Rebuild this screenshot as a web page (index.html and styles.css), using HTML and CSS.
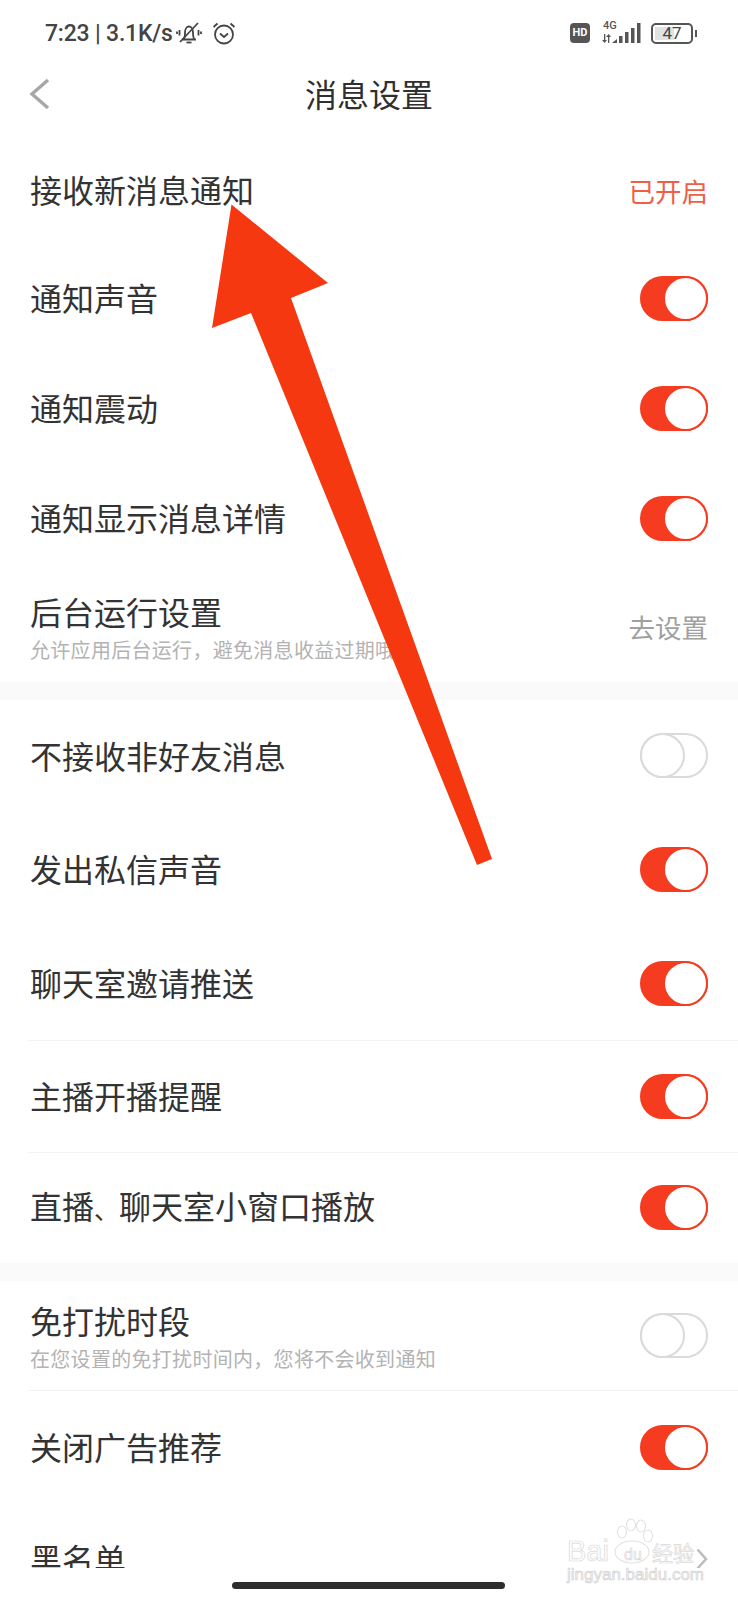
FILE: index.html
```html
<!DOCTYPE html>
<html lang="zh-CN">

<head>
    <meta charset="UTF-8">
    <title>消息设置</title>
    <link rel="stylesheet" href="styles.css">
</head>

<body>
    <div class="phone">
        <div class="statusBar">
            <div class="statusLeft">
                <span class="time">7:23 | 3.1K/s</span>
                <svg class="bell" width="26" height="24" viewBox="0 0 26 24" fill="none" stroke="#444" stroke-width="1.800">
                    <path d="M6 18.500h14M7.500 18.500c1.500-1.800 1.500-3.500 1.500-7 0-3.500 1.800-6 4-6s4 2.500 4 6c0 3.500 0 5.200 1.500 7"></path>
                    <path d="M10.500 21.500h5"></path>
                    <path d="M4 21 22 2"></path>
                    <path d="M3.500 9v5.500M1 10.500v2.500M22.500 9v5.500M25 10.500v2.500"></path>
                </svg>
                <svg class="alarm" width="24" height="24" viewBox="0 0 24 24" fill="none" stroke="#444" stroke-width="1.800">
                    <circle cx="12" cy="13.500" r="9"></circle>
                    <path d="M8 12.500l4 3.500 4-3.500"></path>
                    <path d="M1.500 6 5.500 2.500M22.500 6 18.500 2.500"></path>
                </svg>
            </div>
            <div class="statusRight">
                <span class="hd">HD</span>
                <div class="signal">
                    <span class="fourG">4G</span>
                    <svg width="40" height="22" viewBox="0 0 40 22" fill="#555">
                        <path d="M2 12h1.300v6H5l-2.400 3L0 18h2zM6 21h1.300v-6H9l-2.400-3L4 15h2z"></path>
                        <path d="M10 21l5-4v4zM17 14h3.500v7H17zM23 10h3.500v11H23zM29 6h3.500v15H29zM35 1h3.500v20H35z"></path>
                    </svg>
                </div>
                <div class="battery"><span class="level"></span><span class="percent">47</span></div>
                <span class="batteryTip"></span>
            </div>
        </div>

        <div class="header">
            <svg class="back" width="22" height="32" viewBox="0 0 22 32" fill="none" stroke="#a6a6a6" stroke-width="3.400">
                <path d="M19 2 3 16l16 14"></path>
            </svg>
            <span class="title">消息设置</span>
        </div>

        <div class="list">
            <div class="row first">
                <span class="name">接收新消息通知</span>
                <span class="state on">已开启</span>
            </div>
            <div class="row">
                <span class="name">通知声音</span>
                <span class="switch open"></span>
            </div>
            <div class="row">
                <span class="name">通知震动</span>
                <span class="switch open"></span>
            </div>
            <div class="row">
                <span class="name">通知显示消息详情</span>
                <span class="switch open"></span>
            </div>
            <div class="row sub">
                <div>
                    <div class="name">后台运行设置</div>
                    <div class="desc">允许应用后台运行，避免消息收益过期哦</div>
                </div>
                <span class="state">去设置</span>
            </div>
        </div>

        <div class="band"></div>

        <div class="list">
            <div class="row top">
                <span class="name">不接收非好友消息</span>
                <span class="switch"></span>
            </div>
            <div class="row tall">
                <span class="name">发出私信声音</span>
                <span class="switch open"></span>
            </div>
            <div class="row tall line">
                <span class="name">聊天室邀请推送</span>
                <span class="switch open"></span>
            </div>
            <div class="row mid line">
                <span class="name">主播开播提醒</span>
                <span class="switch open"></span>
            </div>
            <div class="row">
                <span class="name">直播<span class="pause">、</span>聊天室小窗口播放</span>
                <span class="switch open"></span>
            </div>
        </div>

        <div class="band"></div>

        <div class="list">
            <div class="row line">
                <div>
                    <div class="name">免打扰时段</div>
                    <div class="desc">在您设置的免打扰时间内，您将不会收到通知</div>
                </div>
                <span class="switch"></span>
            </div>
            <div class="row tall">
                <span class="name">关闭广告推荐</span>
                <span class="switch open"></span>
            </div>
            <div class="row">
                <span class="name">黑名单</span>
                <svg class="more" width="12" height="22" viewBox="0 0 12 22" fill="none" stroke="#bdbdbd" stroke-width="2.600">
                    <path d="M1.500 1.500 10 11l-8.500 9.500"></path>
                </svg>
            </div>
        </div>

        <!-- the arrow someone painted on top of the screenshot -->
        <svg class="arrow" width="738" height="1600" viewBox="0 0 738 1600">
            <polygon fill="#f53810" points="231.500,204.500 328,283 291,298 492,859 477,865 251,313 212,328"></polygon>
        </svg>

        <div class="navBar"><span class="homeBar"></span></div>

        <div class="mark">
            <svg class="paw" width="42" height="46" viewBox="0 0 42 46" fill="#fff" stroke="#e2e2e2" stroke-width="1.100">
                <ellipse cx="9" cy="14" rx="4.500" ry="6"></ellipse>
                <ellipse cx="18" cy="7" rx="4.500" ry="6"></ellipse>
                <ellipse cx="28" cy="8" rx="4.500" ry="6"></ellipse>
                <ellipse cx="35" cy="18" rx="4.500" ry="6"></ellipse>
                <ellipse cx="19" cy="34" rx="17" ry="11"></ellipse>
            </svg>
            <span class="markBai">Bai</span>
            <span class="markDu">du</span>
            <span class="markJy">经验</span>
            <span class="markUrl">jingyan.baidu.com</span>
        </div>
    </div>
</body>

</html>
```

FILE: styles.css
```css
* {
    margin: 0px;
    padding: 0px;
    box-sizing: border-box;
}

html,
body {
    width: 738px;
    height: 1600px;
    overflow: hidden;
    background-color: #fff;
}

body {
    font-family: "Noto Sans CJK SC", "Noto Sans", sans-serif;
    color: #333;
}

.phone {
    position: relative;
    width: 738px;
    height: 1600px;
    overflow: hidden;
}

.statusBar {
    display: flex;
    justify-content: space-between;
    align-items: center;
    height: 66px;
    padding: 0 41px 0 45px;
}

.statusLeft,
.statusRight {
    display: flex;
    align-items: center;
}

.time {
    font-family: Roboto, sans-serif;
    font-size: 23px;
    font-weight: 500;
    letter-spacing: -.2px;
    color: #444;
    white-space: nowrap;
}

.bell {
    margin-left: 3px;
}

.alarm {
    margin-left: 10px;
}

.hd {
    width: 20px;
    height: 20px;
    border-radius: 4px;
    background-color: #555;
    color: #fff;
    font-family: Roboto, sans-serif;
    font-size: 11px;
    font-weight: 700;
    line-height: 20px;
    text-align: center;
}

.signal {
    position: relative;
    width: 40px;
    height: 22px;
    margin-left: 12px;
}

.signal svg {
    position: absolute;
    left: 0;
    top: 0;
}

.fourG {
    position: absolute;
    left: 1px;
    top: -2px;
    font-family: Roboto, sans-serif;
    font-size: 11px;
    line-height: 11px;
    font-weight: 500;
    color: #555;
}

.battery {
    position: relative;
    width: 42px;
    height: 21px;
    margin-left: 9px;
    border: 2px solid #555;
    border-radius: 5px;
    text-align: center;
}

.level {
    position: absolute;
    left: 2px;
    top: 2px;
    bottom: 2px;
    width: 19px;
    background-color: #e2e2e2;
}

.percent {
    position: relative;
    display: block;
    font-family: Roboto, sans-serif;
    font-size: 17px;
    line-height: 17px;
    color: #444;
}

.batteryTip {
    width: 2px;
    height: 7px;
    margin-left: 2px;
    background-color: #555;
}

.header {
    position: relative;
    display: flex;
    justify-content: center;
    align-items: center;
    height: 54px;
}

.back {
    position: absolute;
    left: 29px;
    top: 12px;
}

.title {
    font-size: 32px;
    color: #2f2f2f;
}

.list {
    background-color: #fff;
}

.row {
    display: flex;
    justify-content: space-between;
    align-items: center;
    height: 110px;
    padding: 0 30px 2px;
}

.row.first {
    height: 124px;
    padding-top: 18px;
}

.row.sub {
    height: 108px;
    padding-bottom: 4px;
}

.row.top {
    height: 113px;
}

.row.tall {
    height: 114px;
}

.row.mid {
    height: 112px;
}

.row.line {
    position: relative;
}

.row.line::after {
    content: "";
    position: absolute;
    left: 28px;
    right: 0;
    bottom: 0;
    height: 1px;
    background-color: #f3f3f3;
}

.name {
    font-size: 32px;
    line-height: 44px;
    padding-bottom: 2px;
    color: #333;
}

.pause {
    font-size: 25px;
}

.desc {
    margin-top: 1px;
    font-size: 20px;
    line-height: 28px;
    letter-spacing: .3px;
    color: #b3b3b3;
}

.state {
    font-size: 26.500px;
    color: #a0a0a0;
}

.state.on {
    color: #ef5f47;
}

.band {
    height: 18px;
    background-color: #fafafa;
}

.switch {
    position: relative;
    flex: none;
    width: 68px;
    height: 45px;
    border: 2px solid #dadada;
    border-radius: 23px;
}

.switch::after {
    content: "";
    box-sizing: border-box;
    position: absolute;
    left: -2px;
    top: -2px;
    width: 45px;
    height: 45px;
    border: 2px solid #dadada;
    border-radius: 50%;
    background-color: #fff;
}

.switch.open {
    border-color: #f63c20;
    background-color: #f63c20;
}

.switch.open::after {
    left: 21px;
    border-color: #f63c20;
}

.arrow {
    position: absolute;
    left: 0;
    top: 0;
}

.navBar {
    position: absolute;
    left: 0;
    right: 0;
    bottom: 0;
    height: 32px;
    background-color: #fff;
}

.homeBar {
    position: absolute;
    left: 232px;
    top: 14px;
    width: 273px;
    height: 7px;
    border-radius: 4px;
    background-color: #2e2e2e;
}

/* watermark, bottom right */
.mark {
    position: absolute;
    left: 560px;
    top: 1518px;
    width: 140px;
    height: 68px;
    color: #fff;
    -webkit-text-stroke: .7px #d8d8d8;
}

.paw {
    position: absolute;
    left: 53px;
    top: 0;
}

.mark span {
    position: absolute;
    white-space: nowrap;
    font-family: "Liberation Sans", sans-serif;
}

.markBai {
    left: 7px;
    top: 18px;
    font-size: 29px;
    line-height: 30px;
}

.markDu {
    left: 64px;
    top: 28px;
    font-size: 16px;
    line-height: 18px;
}

.mark .markJy {
    left: 92px;
    top: 23px;
    font-family: "Noto Sans CJK SC", sans-serif;
    font-size: 21px;
    line-height: 22px;
}

.mark .markUrl {
    left: 7px;
    top: 48px;
    font-size: 17px;
    line-height: 18px;
    color: #f2f2f2;
    -webkit-text-stroke: .6px #d0d0d0;
}
```
